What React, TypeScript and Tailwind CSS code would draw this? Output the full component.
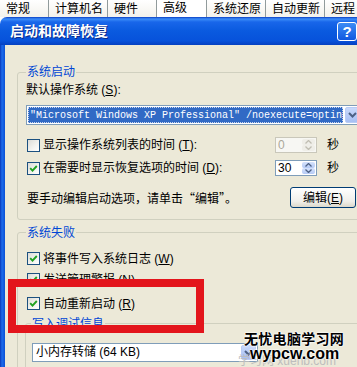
import React from "react";

const font = "font-['Liberation_Sans','Noto_Sans_CJK_SC',sans-serif]";

function Check({ checked }: { checked: boolean }) {
  return (
    <div className="w-[13px] h-[13px] shrink-0 border border-[#1C5180] bg-[linear-gradient(135deg,#DCDCD7_0%,#F2F2EE_55%,#FFFFFF_100%)] flex items-center justify-center">
      {checked && (
        <svg width="9" height="9" viewBox="0 0 9 9">
          <path d="M1.2 4.2 L3.5 6.6 L7.8 2" stroke="#21A121" strokeWidth="1.9" fill="none" />
        </svg>
      )}
    </div>
  );
}

function Arrow({ up, color }: { up: boolean; color: string }) {
  return (
    <svg width="7" height="4" viewBox="0 0 7 4">
      {up ? <path d="M0.5 3.5 L3.5 0.5 L6.5 3.5" stroke={color} strokeWidth="1.3" fill="none" /> : <path d="M0.5 0.5 L3.5 3.5 L6.5 0.5" stroke={color} strokeWidth="1.3" fill="none" />}
    </svg>
  );
}

function Spin({ value, disabled }: { value: string; disabled?: boolean }) {
  return (
    <div
      className={`w-[42px] h-[16px] shrink-0 border flex ${
        disabled ? "border-[#C9C7BA] bg-[#F7F7F3]" : "border-[#7F9DB9] bg-white"
      }`}
    >
      <div className={`flex-1 pl-[2px] text-[12px] leading-[14px] ${disabled ? "text-[#ACA899]" : "text-black"}`}>{value}</div>
      <div className="w-[15px] flex flex-col p-[1px]">
        <div
          className={`flex-1 rounded-[2px] flex items-center justify-center ${
            disabled ? "bg-[#EFEEE8]" : "bg-[linear-gradient(180deg,#D5E2FB,#B5CAF5)]"
          }`}
        >
          <Arrow up color={disabled ? "#C0BEB2" : "#4D6185"} />
        </div>
        <div
          className={`flex-1 rounded-[2px] flex items-center justify-center ${
            disabled ? "bg-[#EFEEE8]" : "bg-[linear-gradient(180deg,#D5E2FB,#B5CAF5)]"
          }`}
        >
          <Arrow up={false} color={disabled ? "#C0BEB2" : "#4D6185"} />
        </div>
      </div>
    </div>
  );
}

function ComboButton() {
  return (
    <div className="w-[17px] h-full shrink-0 p-[1px]">
      <div className="w-full h-full rounded-[2px] border border-[#B9CCF5] bg-[linear-gradient(180deg,#C9D9FB,#A7BFF3)] flex items-center justify-center">
        <svg width="9" height="6" viewBox="0 0 9 6">
          <path d="M1 1 L4.5 4.5 L8 1" stroke="#4D6185" strokeWidth="2" fill="none" />
        </svg>
      </div>
    </div>
  );
}

function M({ k }: { k: string }) {
  return (
    <span>
      {" "}(<u>{k}</u>)
    </span>
  );
}

const tabs: [string, number, boolean][] = [
  ["常规", 49, false],
  ["计算机名", 59, false],
  ["硬件", 49, false],
  ["高级", 50, true],
  ["系统还原", 59, false],
  ["自动更新", 59, false],
  ["远程", 40, false],
];

export default function App() {
  return (
    <div className={`relative w-[357px] h-[367px] overflow-hidden bg-[#FCFCFE] ${font} text-[12px] text-black`}>
      {/* tabs */}
      <div className="flex h-[17px] overflow-hidden">
        {tabs.map(([t, w, sel]) => (
          <div
            key={t}
            style={{ width: w }}
            className={`shrink-0 h-[17px] border-r border-[#919B9C] pl-[6px] flex items-center leading-[14px] ${
              sel ? "bg-white pb-[2px]" : "bg-[linear-gradient(180deg,#FFFFFF,#F3F2EC)]"
            }`}
          >
            {t}
          </div>
        ))}
      </div>

      {/* window */}
      <div className="flex flex-col">
        <div className="h-[28px] rounded-tl-[7px] bg-[linear-gradient(180deg,#0A3FC4_0px,#3C8DF8_2px,#1866EA_5px,#0A5ADF_50%,#0752DB_85%,#0540C0_100%)] flex items-center">
          <div className="pl-[10px] text-[14px] font-bold text-white leading-[16px] [text-shadow:1px_1px_0_#0A2A8A]">
            启动和故障恢复
          </div>
          <div className="ml-auto w-[20px] h-[19px] rounded-[3px] border border-white bg-[linear-gradient(180deg,#3C8CF5,#1058E0)] flex items-center justify-center text-white font-bold text-[15px] leading-[15px] font-['Liberation_Sans',sans-serif]">
            ?
          </div>
        </div>

        <div className="flex">
          <div className="w-[5px] shrink-0 bg-[linear-gradient(90deg,#0836B8,#1C6CEC_40%,#0A50D6)]" />
          <div className="flex-1 bg-[#ECE9D8] h-[322px] overflow-hidden pl-[12px] pt-[27px]">
            {/* group 1 */}
            <div className="relative w-[360px] border border-[#D0D0BF] rounded-[3px] pt-[10px] pb-[11px]">
              <div className="absolute -top-[8px] left-[8px] px-[1px] bg-[#ECE9D8] text-[#0046D5] leading-[14px]">系统启动</div>
              <div className="pl-[8px] h-[14px] leading-[14px]">
                默认操作系统<M k="S" />:
              </div>
              <div className="ml-[8px] mt-[8px] w-[336px] h-[20px] border border-[#7F9DB9] bg-white flex">
                <div className="flex-1 p-[1px]">
                  <div className="h-full bg-[#316AC5] text-white border border-dotted border-[#C8D4EC] font-['Liberation_Mono',monospace] text-[10px] leading-[15px] pl-[1px] whitespace-nowrap overflow-hidden">
                    "Microsoft Windows XP Professional" /noexecute=optin
                  </div>
                </div>
                <ComboButton />
              </div>

              <div className="mt-[12px] h-[16px] flex items-center pl-[9px]">
                <div className="w-[248px] flex items-center gap-[3px]">
                  <Check checked={false} />
                  <span className="leading-[14px] whitespace-nowrap">
                    显示操作系统列表的时间<M k="T" />:
                  </span>
                </div>
                <Spin value="0" disabled />
                <span className="ml-[10px] leading-[14px]">秒</span>
              </div>

              <div className="mt-[7px] h-[16px] flex items-center pl-[9px]">
                <div className="w-[248px] flex items-center gap-[3px]">
                  <Check checked />
                  <span className="leading-[14px] whitespace-nowrap">
                    在需要时显示恢复选项的时间<M k="D" />:
                  </span>
                </div>
                <Spin value="30" />
                <span className="ml-[10px] leading-[14px]">秒</span>
              </div>

              <div className="mt-[11px] h-[21px] flex items-center pl-[9px]">
                <div className="w-[263px] leading-[14px] whitespace-nowrap font-['Noto_Sans_CJK_SC',sans-serif]">要手动编辑启动选项，请单击“编辑”。</div>
                <div className="w-[66px] h-[21px] rounded-[3px] border border-[#003C74] bg-[linear-gradient(180deg,#FFFFFF,#F0EFEA_70%,#DCD8CB)] flex items-center justify-center leading-[14px]">
                  编辑<M k="E" />
                </div>
              </div>
            </div>

            {/* group 2 */}
            <div className="relative mt-[12px] w-[360px] h-[200px] border border-[#D0D0BF] rounded-[3px] pt-[19px]">
              <div className="absolute -top-[7px] left-[8px] px-[1px] bg-[#ECE9D8] text-[#0046D5] leading-[14px]">系统失败</div>
              <div className="pl-[9px] h-[13px] flex items-center gap-[3px]">
                <Check checked />
                <span className="leading-[14px]">
                  将事件写入系统日志<M k="W" />
                </span>
              </div>
              <div className="mt-[8px] pl-[9px] h-[13px] flex items-center gap-[3px]">
                <Check checked />
                <span className="leading-[14px]">
                  发送管理警报<M k="N" />
                </span>
              </div>
              <div className="mt-[11px] pl-[9px] h-[13px] flex items-center gap-[3px]">
                <Check checked />
                <span className="leading-[14px]">
                  自动重新启动<M k="R" />
                </span>
              </div>

              <div className="relative mt-[13px] ml-[7px] w-[350px] h-[100px] border border-[#D0D0BF] rounded-[3px] pt-[19px] pl-[6px]">
                <div className="absolute -top-[7px] left-[5px] px-[1px] bg-[#ECE9D8] text-[#0046D5] leading-[14px]">写入调试信息</div>
                <div className="w-[226px] h-[19px] border border-[#7F9DB9] bg-white flex">
                  <div className="flex-1 pl-[3px] leading-[16px] whitespace-nowrap">
                    小内存转储 (64 KB)
                  </div>
                  <ComboButton />
                </div>
              </div>
            </div>
          </div>
        </div>
      </div>

      {/* red annotation box */}
      <div className="absolute left-[8px] top-[279px] w-[196px] h-[54px] border-[8px] border-[#E3151C]" />

      {/* watermark */}
      <div className="absolute left-[238px] top-[355px] text-[#BDBDBD] text-[12px] leading-[12px] font-['Liberation_Sans','Noto_Sans_CJK_SC',sans-serif] whitespace-nowrap">
        学习网 xuehb.com
      </div>
      <div className="absolute left-[244px] top-[332px] flex flex-col items-start">
        <div className="text-[14px] font-bold leading-[15px] tracking-[0.3px] text-black [text-shadow:0_0_2px_#fff,0_0_2px_#fff,0_0_2px_#fff]">
          无忧电脑学习网
        </div>
        <div className="ml-[6px] text-[16px] font-bold leading-[13px] text-black font-['Liberation_Sans',sans-serif] [text-shadow:0_0_2px_#fff,0_0_2px_#fff,0_0_2px_#fff]">
          wypcw.com
        </div>
      </div>
    </div>
  );
}
